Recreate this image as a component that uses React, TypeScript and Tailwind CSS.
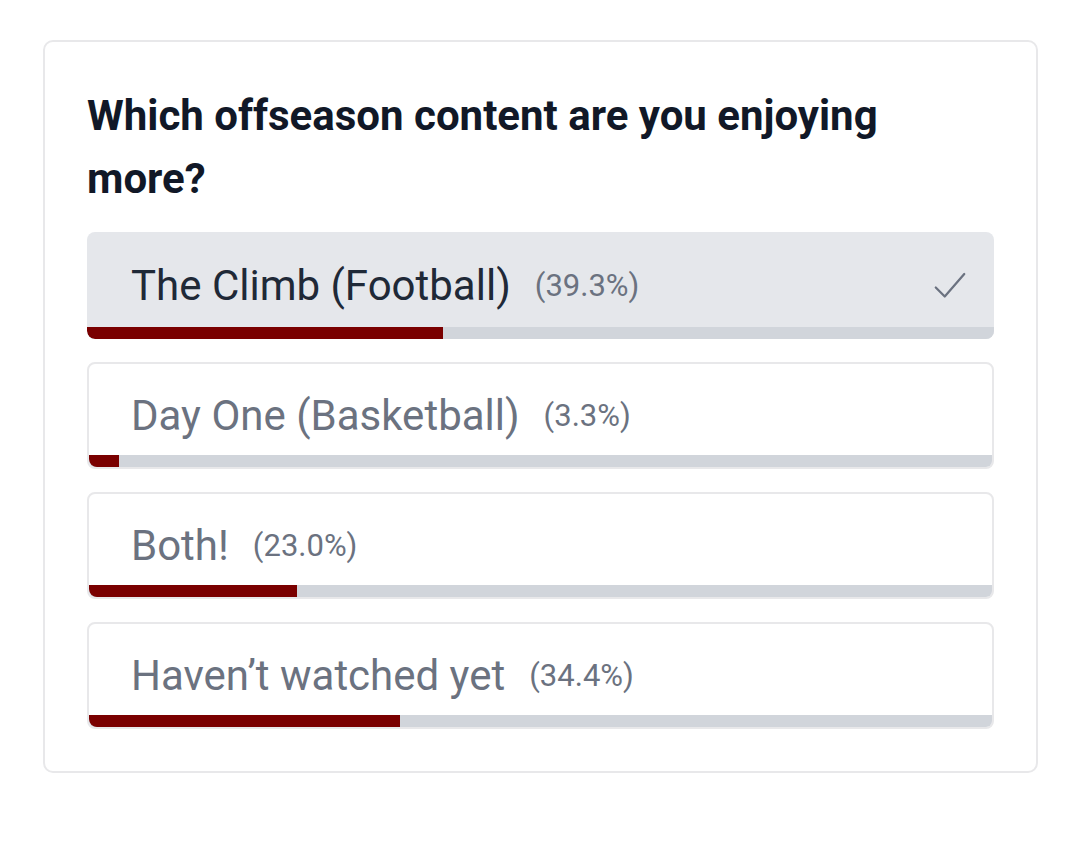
const options = [
  { label: 'The Climb (Football)', pct: 39.3, selected: true },
  { label: 'Day One (Basketball)', pct: 3.3, selected: false },
  { label: 'Both!', pct: 23.0, selected: false },
  { label: 'Haven’t watched yet', pct: 34.4, selected: false },
];

function Check() {
  return (
    <svg width="36" height="36" viewBox="0 0 24 24" fill="none" stroke="#6b7280" strokeWidth="1.5" strokeLinecap="round" strokeLinejoin="round">
      <path d="M2.5 13l6 6L21.5 4" />
    </svg>
  );
}

export default function App() {
  return (
    <div className="min-h-[841px] w-[1080px] bg-white pt-[40px] pl-[43px]" style={{ fontFamily: 'Roboto, "Liberation Sans", sans-serif' }}>
      <div className="w-[995px] rounded-[10px] border-2 border-[#e8e8ea] px-[42px] pt-[42px] pb-[42px]">
        <h1 className="text-[42px] font-bold leading-[63px] text-[#111827]">
          Which offseason content are you enjoying more?
        </h1>
        <div className="mt-[22px] flex flex-col gap-[23px]">
          {options.map((o) => (
            <div
              key={o.label}
              className={`relative flex h-[107px] flex-col overflow-hidden rounded-[8px] ${
                o.selected ? 'bg-[#e5e7eb]' : 'border-2 border-[#e8e8ea] bg-white'
              }`}
            >
              <div className={`flex flex-1 items-center pt-[12px] ${o.selected ? 'pl-[44px] pr-[26px]' : 'pl-[42px] pr-[24px]'}`}>
                <span className={`text-[42px] leading-none ${o.selected ? 'text-[#1f2937]' : 'text-[#6b7280]'}`}>{o.label}</span>
                <span className="ml-[24px] text-[31px] leading-none text-[#6b7280]">({o.pct.toFixed(1)}%)</span>
                {o.selected ? (
                  <span className="ml-auto">
                    <Check />
                  </span>
                ) : null}
              </div>
              <div className="h-[12px] w-full bg-[#d1d5db]">
                <div className="h-full rounded-bl-[8px] bg-[#7a0000]" style={{ width: `${o.pct}%` }} />
              </div>
            </div>
          ))}
        </div>
      </div>
    </div>
  );
}
